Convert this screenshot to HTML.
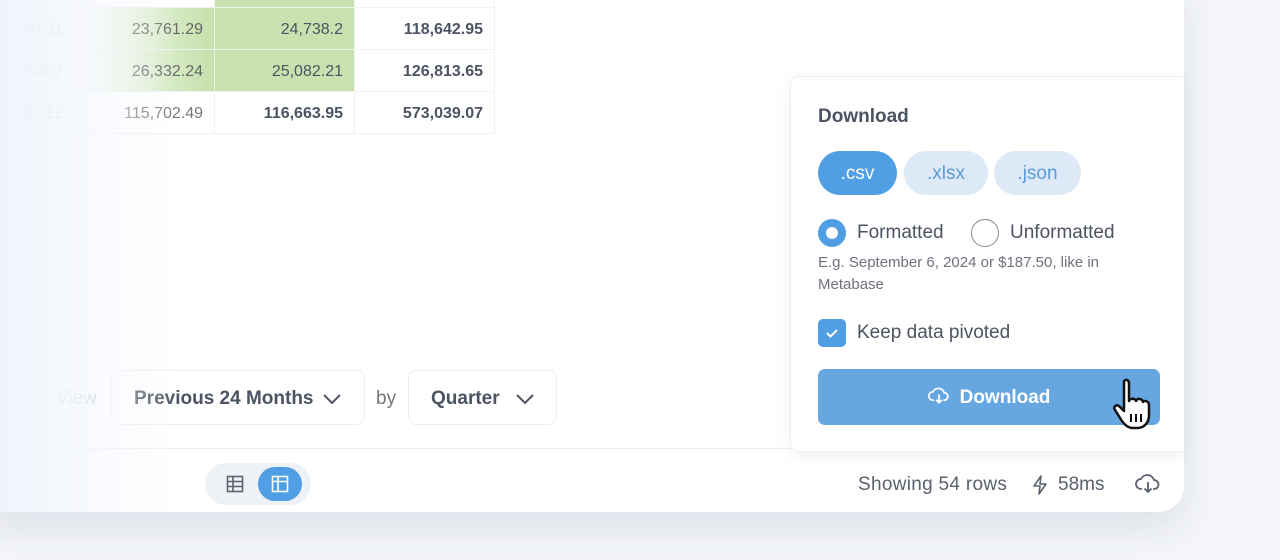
<!DOCTYPE html>
<html><head><style>
*{margin:0;padding:0;box-sizing:border-box}
body{width:1280px;height:560px;overflow:hidden;background:#f4f6fa;font-family:"Liberation Sans",sans-serif;position:relative}
.card{position:absolute;left:-20px;top:-20px;width:1204px;height:532px;background:#fff;border-radius:0 0 26px 0;box-shadow:0 18px 40px rgba(40,50,80,.10)}
.cell{position:absolute;height:42px;border-right:1px solid #eef0f2;border-bottom:1px solid #eef0f2;text-align:right;padding-right:11px;line-height:44px;font-size:16px;color:#4c5362}
.g{background:#c7e2ae}
.fade{position:absolute;left:0;top:0;width:180px;height:512px;background:linear-gradient(90deg,rgba(240,245,252,1) 0%,rgba(244,247,252,.88) 38%,rgba(255,255,255,0) 100%)}
.sel{position:absolute;top:370px;height:55px;border:1px solid #eceef1;border-radius:8px;font-size:19px;font-weight:bold;color:#4c5362;line-height:55px;padding-left:22px}
.pop{position:absolute;left:790px;top:76px;width:394px;height:376px;background:#fff;border:1px solid #eceef1;border-right:none;border-radius:8px 0 0 8px;box-shadow:0 4px 16px rgba(0,0,0,.06)}
.pill{position:absolute;top:74px;height:44px;border-radius:22px;background:#dde9f6;color:#5c9ad6;font-size:19px;line-height:46px;text-align:center}
</style></head><body>
<div class="card"></div>
<div class="cell" style="left:75px;top:-34px;width:140px" ></div>
<div class="cell g" style="left:215px;top:-34px;width:140px"></div>
<div class="cell" style="left:355px;top:-34px;width:140px"></div>
<div class="cell" style="left:-65px;top:8px;width:140px;color:#aaa">549.31</div>
<div class="cell" style="left:75px;top:8px;width:140px;background:linear-gradient(90deg,#fff,#c7e2ae 95%);color:#666">23,761.29</div>
<div class="cell g" style="left:215px;top:8px;width:140px">24,738.2</div>
<div class="cell" style="left:355px;top:8px;width:140px;font-weight:bold">118,642.95</div>
<div class="cell" style="left:-65px;top:50px;width:140px;color:#aaa">6,348.7</div>
<div class="cell" style="left:75px;top:50px;width:140px;background:linear-gradient(90deg,#fff,#c7e2ae 95%);color:#666">26,332.24</div>
<div class="cell g" style="left:215px;top:50px;width:140px">25,082.21</div>
<div class="cell" style="left:355px;top:50px;width:140px;font-weight:bold">126,813.65</div>
<div class="cell" style="left:-65px;top:92px;width:140px;color:#aaa">582.12</div>
<div class="cell" style="left:75px;top:92px;width:140px;color:#777">115,702.49</div>
<div class="cell" style="left:215px;top:92px;width:140px;font-weight:bold">116,663.95</div>
<div class="cell" style="left:355px;top:92px;width:140px;font-weight:bold">573,039.07</div>
<div style="position:absolute;left:56px;top:388px;font-size:19px;color:#b9bec6">View</div>
<div class="sel" style="left:111px;width:254px">Previous 24 Months<svg style="position:absolute;left:210px;top:22px" width="20" height="12" viewBox="0 0 20 12"><path d="M2 2l8 8 8-8" fill="none" stroke="#4c5362" stroke-width="2"/></svg></div>
<div style="position:absolute;left:376px;top:388px;font-size:19px;color:#777">by</div>
<div class="sel" style="left:408px;width:149px">Quarter<svg style="position:absolute;left:106px;top:22px" width="20" height="12" viewBox="0 0 20 12"><path d="M2 2l8 8 8-8" fill="none" stroke="#4c5362" stroke-width="2"/></svg></div>
<div style="position:absolute;left:30px;top:448px;width:1154px;height:1px;background:#eceef1"></div>
<div class="fade"></div>
<div style="position:absolute;left:205px;top:463px;width:106px;height:42px;border-radius:21px;background:#eef1f5"></div>
<svg style="position:absolute;left:226px;top:475px" width="18" height="18" viewBox="0 0 18 18"><rect x="1.5" y="1.5" width="15" height="15" fill="none" stroke="#5b616e" stroke-width="1.6"/><path d="M1.5 6.5h15M1.5 11.5h15M7 1.5v15" stroke="#5b616e" stroke-width="1.6"/></svg>
<div style="position:absolute;left:258px;top:467px;width:44px;height:34px;border-radius:17px;background:#509ee3"></div>
<svg style="position:absolute;left:271px;top:475px" width="18" height="18" viewBox="0 0 18 18"><rect x="1.5" y="1.5" width="15" height="15" fill="none" stroke="#fff" stroke-width="1.6"/><path d="M1.5 6.5h15M7 1.5v15" stroke="#fff" stroke-width="1.6"/></svg>
<div style="position:absolute;left:858px;top:474px;font-size:19px;color:#5b616e;letter-spacing:.3px;font-weight:bold;font-weight:normal">Showing 54 rows</div>
<svg style="position:absolute;left:1032px;top:475px" width="16" height="20" viewBox="0 0 16 20"><path d="M9 1L2 11h6l-1 8 7-10H8z" fill="none" stroke="#5b616e" stroke-width="1.6" stroke-linejoin="round"/></svg>
<div style="position:absolute;left:1058px;top:474px;font-size:19px;color:#5b616e">58ms</div>
<svg style="position:absolute;left:1135px;top:473px" width="26" height="22" viewBox="0 0 26 22"><path d="M7 16H6a5 5 0 0 1 0-10 7 7 0 0 1 13 1 4 4 0 0 1 0 9h-1" fill="none" stroke="#5b616e" stroke-width="1.8"/><path d="M13 9v10M9.5 15.5l3.5 3.5 3.5-3.5" fill="none" stroke="#5b616e" stroke-width="1.8"/></svg>
<div class="pop">
<div style="position:absolute;left:27px;top:29px;font-size:19px;font-weight:bold;color:#4c5362">Download</div>
<div class="pill" style="left:27px;width:79px;background:#509ee3;color:#fff">.csv</div>
<div class="pill" style="left:113px;width:84px">.xlsx</div>
<div class="pill" style="left:203px;width:87px">.json</div>
<div style="position:absolute;left:27px;top:142px;width:28px;height:28px;border-radius:50%;border:8px solid #509ee3;background:#fff"></div>
<div style="position:absolute;left:66px;top:145px;font-size:19px;color:#4c5362">Formatted</div>
<div style="position:absolute;left:180px;top:142px;width:28px;height:28px;border-radius:50%;border:1.5px solid #888"></div>
<div style="position:absolute;left:219px;top:145px;font-size:19px;color:#4c5362">Unformatted</div>
<div style="position:absolute;left:27px;top:175px;width:340px;font-size:15px;line-height:22px;color:#6c717c">E.g. September 6, 2024 or $187.50, like in Metabase</div>
<div style="position:absolute;left:27px;top:242px;width:28px;height:28px;border-radius:5px;background:#509ee3"><svg width="28" height="28" viewBox="0 0 28 28"><path d="M9 14l3.5 3.5L19 11" fill="none" stroke="#fff" stroke-width="2"/></svg></div>
<div style="position:absolute;left:66px;top:245px;font-size:19px;color:#4c5362">Keep data pivoted</div>
<div style="position:absolute;left:27px;top:292px;width:342px;height:56px;border-radius:7px;background:#66a7e2;color:#fff;font-size:19px;font-weight:bold;line-height:58px;text-align:center">
<svg style="vertical-align:-3px;margin-right:10px" width="22" height="20" viewBox="0 0 26 22"><path d="M7 16H6a5 5 0 0 1 0-10 7 7 0 0 1 13 1 4 4 0 0 1 0 9h-1" fill="none" stroke="#fff" stroke-width="2"/><path d="M13 9v10M9.5 15.5l3.5 3.5 3.5-3.5" fill="none" stroke="#fff" stroke-width="2"/></svg>Download</div>
<svg style="position:absolute;left:320px;top:300px" width="50" height="56" viewBox="0 0 50 56"><path d="M13 4c2-2 5-1 5 2v18c1-3 6-3 7 0 1-3 6-3 7 1 1-2 6-1 6 3v10c0 8-5 13-12 13h-4c-5 0-8-3-11-7L4 33c-2-3 1-6 4-4l5 5z" fill="#fff" stroke="#111" stroke-width="2.5" stroke-linejoin="round"/><path d="M20 37v8M25 37v8M30 37v8" stroke="#111" stroke-width="2"/></svg>
</div>
</body></html>
